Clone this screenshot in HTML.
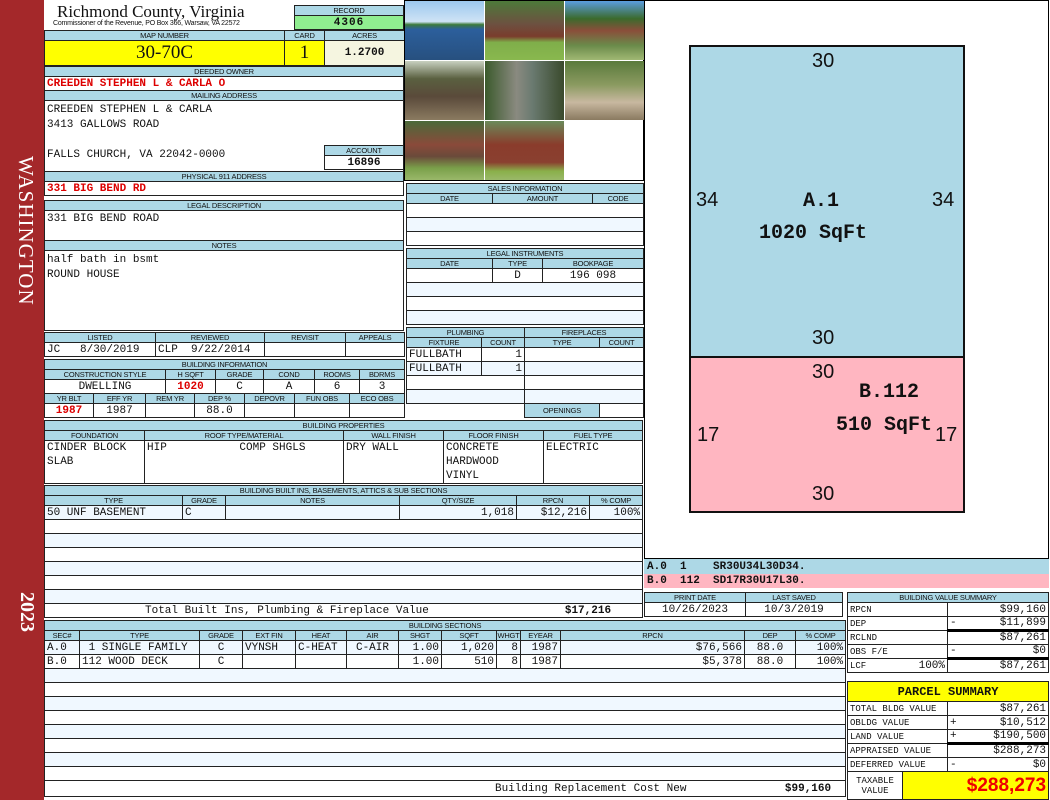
<!DOCTYPE html>
<html><head><meta charset="utf-8"><style>
*{margin:0;padding:0;box-sizing:border-box}
body{width:1050px;height:800px;position:relative;background:#fff;overflow:hidden;font-family:"Liberation Mono",monospace;color:#111}
.a{position:absolute}
table{position:absolute;border-collapse:collapse;table-layout:fixed}
td{border:1px solid #222;padding:0 2px;white-space:nowrap;overflow:hidden;font:11px/12px "Liberation Mono",monospace;height:14px}
td.h,.hd{background:#add8e6;font:7.5px/9px "Liberation Sans",sans-serif;text-align:center;height:10px;letter-spacing:-.2px;padding:0}
td.c{text-align:center}td.r{text-align:right}
tr.z td{background:#f0f8ff}
.red{color:#d00;font-weight:bold}
.ph{position:absolute;width:79px;height:59px}
</style></head><body>
<!-- sidebar -->
<div class="a" style="left:0;top:0;width:44px;height:800px;background:#a4282a"></div>
<div class="a" style="left:8px;top:156px;width:30px;height:170px;writing-mode:vertical-rl;color:#fff;font:21px 'Liberation Serif',serif;letter-spacing:1px">WASHINGTON</div>
<div class="a" style="left:8px;top:592px;width:30px;writing-mode:vertical-rl;color:#fff;font:bold 20px 'Liberation Serif',serif">2023</div>

<!-- title -->
<div class="a" style="left:57px;top:2px;font:17px/19px 'Liberation Serif',serif">Richmond County, Virginia</div>
<div class="a" style="left:53px;top:20px;font:7px/8px 'Liberation Sans',sans-serif;letter-spacing:-.2px">Commissioner of the Revenue, PO Box 366, Warsaw, VA 22572</div>
<table style="left:294px;top:5px;width:110px"><tr><td class="h">RECORD</td></tr><tr><td class="c" style="background:#90ee90;font-weight:bold;letter-spacing:1px">4306</td></tr></table>
<table style="left:44px;top:30px;width:360px"><col style="width:240px"><col style="width:40px"><col style="width:80px">
<tr><td class="h">MAP NUMBER</td><td class="h">CARD</td><td class="h">ACRES</td></tr>
<tr><td class="c" style="background:#ffff00;font:19px/24px 'Liberation Serif',serif;height:25px">30-70C</td><td class="c" style="background:#ffff00;font:19px/24px 'Liberation Serif',serif">1</td><td class="c" style="background:#f5f5e0;font-weight:bold">1.2700</td></tr></table>
<table style="left:44px;top:66px;width:360px"><tr><td class="h">DEEDED OWNER</td></tr><tr><td class="red">CREEDEN STEPHEN L &amp; CARLA O</td></tr><tr><td class="h">MAILING ADDRESS</td></tr>
<tr><td style="height:71px;vertical-align:top;line-height:15px;padding-top:2px">CREEDEN STEPHEN L &amp; CARLA<br>3413 GALLOWS ROAD<br><br>FALLS CHURCH, VA 22042-0000</td></tr>
<tr><td class="h">PHYSICAL 911 ADDRESS</td></tr><tr><td class="red">331 BIG BEND RD</td></tr></table>
<table style="left:324px;top:145px;width:80px"><tr><td class="h">ACCOUNT</td></tr><tr><td class="c" style="font-weight:bold;background:#fff">16896</td></tr></table>
<table style="left:44px;top:200px;width:360px"><tr><td class="h">LEGAL DESCRIPTION</td></tr><tr><td style="height:30px;vertical-align:top;padding-top:2px">331 BIG BEND ROAD</td></tr>
<tr><td class="h">NOTES</td></tr><tr><td style="height:80px;vertical-align:top;line-height:15px;padding-top:2px">half bath in bsmt<br>ROUND HOUSE</td></tr></table>
<table style="left:44px;top:332px;width:360px"><col style="width:111px"><col style="width:109px"><col style="width:81px"><col style="width:59px">
<tr><td class="h">LISTED</td><td class="h">REVIEWED</td><td class="h">REVISIT</td><td class="h">APPEALS</td></tr>
<tr><td>JC&nbsp;&nbsp;&nbsp;8/30/2019</td><td>CLP&nbsp;&nbsp;9/22/2014</td><td></td><td></td></tr></table>
<table style="left:44px;top:359px;width:360px"><col style="width:121px"><col style="width:50px"><col style="width:48px"><col style="width:51px"><col style="width:45px"><col style="width:45px">
<tr><td class="h" colspan="6">BUILDING INFORMATION</td></tr>
<tr><td class="h">CONSTRUCTION STYLE</td><td class="h">H SQFT</td><td class="h">GRADE</td><td class="h">COND</td><td class="h">ROOMS</td><td class="h">BDRMS</td></tr>
<tr><td class="c">DWELLING</td><td class="c red">1020</td><td class="c">C</td><td class="c">A</td><td class="c">6</td><td class="c">3</td></tr></table>
<table style="left:44px;top:393px;width:360px"><col style="width:49px"><col style="width:52px"><col style="width:49px"><col style="width:50px"><col style="width:50px"><col style="width:55px"><col style="width:55px">
<tr><td class="h">YR BLT</td><td class="h">EFF YR</td><td class="h">REM YR</td><td class="h">DEP %</td><td class="h">DEPOVR</td><td class="h">FUN OBS</td><td class="h">ECO OBS</td></tr>
<tr><td class="c red">1987</td><td class="c">1987</td><td></td><td class="c">88.0</td><td></td><td></td><td></td></tr></table>

<!-- photos -->
<div class="a" style="left:404px;top:0;width:240px;height:181px;background:#fff;border:1px solid #000"></div>
<div class="ph" style="left:405px;top:1px;background:linear-gradient(#9cc8ee 0,#cfe3f5 35%,#3c7a3a 40%,#2c5f9c 48%,#27507f 100%)"></div>
<div class="ph" style="left:485px;top:1px;background:linear-gradient(#4d7a3a 0,#6d5040 40%,#7a3c2c 60%,#7fae4a 70%,#89b84e 100%)"></div>
<div class="ph" style="left:565px;top:1px;background:linear-gradient(#5b9de0 0,#3b6a2c 30%,#8a4e3a 50%,#6a8a4a 75%,#a0b873 100%)"></div>
<div class="ph" style="left:405px;top:61px;background:linear-gradient(#c8d0c0 0,#5a6040 30%,#5a4a3a 60%,#8a7a60 100%)"></div>
<div class="ph" style="left:485px;top:61px;background:linear-gradient(90deg,#3b5a2c 0,#8a8a80 40%,#6a7a70 60%,#3a4a2c 100%)"></div>
<div class="ph" style="left:565px;top:61px;background:linear-gradient(#5a7a3c 0,#8a9a60 40%,#c8b8a0 70%,#8a7a60 100%)"></div>
<div class="ph" style="left:405px;top:121px;background:linear-gradient(#4a6a3a 0,#8a4a3a 40%,#6a4a3a 60%,#7aa04a 80%,#9ab86a 100%)"></div>
<div class="ph" style="left:485px;top:121px;background:linear-gradient(#6a8a5a 0,#8a3c2c 40%,#8a4030 70%,#8ab04a 85%,#9ab86a 100%)"></div>

<!-- sales -->
<table style="left:406px;top:183px;width:237px"><col style="width:86px"><col style="width:100px"><col style="width:51px">
<tr><td class="h" colspan="3">SALES INFORMATION</td></tr>
<tr><td class="h">DATE</td><td class="h">AMOUNT</td><td class="h">CODE</td></tr>
<tr><td colspan="3"></td></tr><tr class="z"><td colspan="3"></td></tr><tr><td colspan="3"></td></tr></table>
<table style="left:406px;top:248px;width:237px"><col style="width:86px"><col style="width:50px"><col style="width:101px">
<tr><td class="h" colspan="3">LEGAL INSTRUMENTS</td></tr>
<tr><td class="h">DATE</td><td class="h">TYPE</td><td class="h">BOOKPAGE</td></tr>
<tr><td></td><td class="c">D</td><td class="c">196 098</td></tr>
<tr class="z"><td colspan="3"></td></tr><tr><td colspan="3"></td></tr><tr class="z"><td colspan="3"></td></tr></table>
<table style="left:406px;top:327px;width:237px"><col style="width:75px"><col style="width:43px"><col style="width:75px"><col style="width:44px">
<tr><td class="h" colspan="2">PLUMBING</td><td class="h" colspan="2">FIREPLACES</td></tr>
<tr><td class="h">FIXTURE</td><td class="h">COUNT</td><td class="h">TYPE</td><td class="h">COUNT</td></tr>
<tr><td>FULLBATH</td><td class="r">1</td><td colspan="2"></td></tr>
<tr class="z"><td>FULLBATH</td><td class="r">1</td><td colspan="2"></td></tr>
<tr><td colspan="2"></td><td colspan="2"></td></tr>
<tr class="z"><td colspan="2"></td><td colspan="2"></td></tr>
<tr><td colspan="2" style="border:none;background:#fff"></td><td class="h" style="height:12px">OPENINGS</td><td></td></tr></table>

<!-- building properties -->
<table style="left:44px;top:420px;width:598px"><col style="width:100px"><col style="width:199px"><col style="width:100px"><col style="width:100px"><col style="width:99px">
<tr><td class="h" colspan="5">BUILDING PROPERTIES</td></tr>
<tr><td class="h">FOUNDATION</td><td class="h">ROOF TYPE/MATERIAL</td><td class="h">WALL FINISH</td><td class="h">FLOOR FINISH</td><td class="h">FUEL TYPE</td></tr>
<tr><td style="height:42px;vertical-align:top;line-height:14px">CINDER BLOCK<br>SLAB</td><td style="vertical-align:top;line-height:14px">HIP&nbsp;&nbsp;&nbsp;&nbsp;&nbsp;&nbsp;&nbsp;&nbsp;&nbsp;&nbsp;&nbsp;COMP SHGLS</td><td style="vertical-align:top;line-height:14px">DRY WALL</td><td style="vertical-align:top;line-height:14px">CONCRETE<br>HARDWOOD<br>VINYL</td><td style="vertical-align:top;line-height:14px">ELECTRIC</td></tr></table>
<table style="left:44px;top:485px;width:598px"><col style="width:138px"><col style="width:43px"><col style="width:174px"><col style="width:117px"><col style="width:73px"><col style="width:53px">
<tr><td class="h" colspan="6">BUILDING BUILT INS, BASEMENTS, ATTICS &amp; SUB SECTIONS</td></tr>
<tr><td class="h">TYPE</td><td class="h">GRADE</td><td class="h">NOTES</td><td class="h">QTY/SIZE</td><td class="h">RPCN</td><td class="h">% COMP</td></tr>
<tr class="z"><td>50 UNF BASEMENT</td><td>C</td><td></td><td class="r">1,018</td><td class="r">$12,216</td><td class="r">100%</td></tr>
<tr><td colspan="6"></td></tr><tr class="z"><td colspan="6"></td></tr><tr><td colspan="6"></td></tr><tr class="z"><td colspan="6"></td></tr><tr><td colspan="6"></td></tr><tr class="z"><td colspan="6"></td></tr>
<tr><td colspan="6" style="padding-left:100px">Total Built Ins, Plumbing &amp; Fireplace Value<b style="float:right;margin-right:29px">$17,216</b></td></tr></table>

<!-- building sections -->
<table style="left:44px;top:620px;width:801px"><col style="width:35px"><col style="width:120px"><col style="width:43px"><col style="width:53px"><col style="width:51px"><col style="width:52px"><col style="width:43px"><col style="width:55px"><col style="width:24px"><col style="width:40px"><col style="width:184px"><col style="width:51px"><col style="width:50px">
<tr><td class="h" colspan="13">BUILDING SECTIONS</td></tr>
<tr><td class="h">SEC#</td><td class="h">TYPE</td><td class="h">GRADE</td><td class="h">EXT FIN</td><td class="h">HEAT</td><td class="h">AIR</td><td class="h">SHGT</td><td class="h">SQFT</td><td class="h">WHGT</td><td class="h">EYEAR</td><td class="h">RPCN</td><td class="h">DEP</td><td class="h">% COMP</td></tr>
<tr class="z"><td>A.0</td><td>&nbsp;1 SINGLE FAMILY</td><td class="c">C</td><td>VYNSH</td><td>C-HEAT</td><td class="c">C-AIR</td><td class="r">1.00</td><td class="r">1,020</td><td class="r">8</td><td class="r">1987</td><td class="r">$76,566</td><td class="c">88.0</td><td class="r">100%</td></tr>
<tr><td>B.0</td><td>112 WOOD DECK</td><td class="c">C</td><td></td><td></td><td></td><td class="r">1.00</td><td class="r">510</td><td class="r">8</td><td class="r">1987</td><td class="r">$5,378</td><td class="c">88.0</td><td class="r">100%</td></tr>
<tr class="z"><td colspan="13"></td></tr><tr><td colspan="13"></td></tr><tr class="z"><td colspan="13"></td></tr><tr><td colspan="13"></td></tr><tr class="z"><td colspan="13"></td></tr><tr><td colspan="13"></td></tr><tr class="z"><td colspan="13"></td></tr><tr><td colspan="13"></td></tr>
<tr><td colspan="13" style="padding-left:450px;height:16px">Building Replacement Cost New<b style="float:right;margin-right:12px">$99,160</b></td></tr></table>

<!-- sketch -->
<div class="a" style="left:644px;top:0;width:405px;height:559px;border:1px solid #000"></div>
<div class="a" style="left:689px;top:45px;width:276px;height:313px;background:#add8e6;border:2px solid #111"></div>
<div class="a" style="left:689px;top:356px;width:276px;height:157px;background:#ffb6c1;border:2px solid #111"></div>
<div class="a" style="font:20px 'Liberation Sans',sans-serif;left:812px;top:50px">30</div>
<div class="a" style="font:20px 'Liberation Sans',sans-serif;left:696px;top:189px">34</div>
<div class="a" style="font:20px 'Liberation Sans',sans-serif;left:932px;top:189px">34</div>
<div class="a" style="font:bold 20px 'Liberation Mono',monospace;left:803px;top:190px">A.1</div>
<div class="a" style="font:bold 20px 'Liberation Mono',monospace;left:759px;top:222px">1020 SqFt</div>
<div class="a" style="font:20px 'Liberation Sans',sans-serif;left:812px;top:327px">30</div>
<div class="a" style="font:20px 'Liberation Sans',sans-serif;left:812px;top:361px">30</div>
<div class="a" style="font:bold 20px 'Liberation Mono',monospace;left:859px;top:381px">B.112</div>
<div class="a" style="font:bold 20px 'Liberation Mono',monospace;left:836px;top:414px">510 SqFt</div>
<div class="a" style="font:20px 'Liberation Sans',sans-serif;left:697px;top:424px">17</div>
<div class="a" style="font:20px 'Liberation Sans',sans-serif;left:935px;top:424px">17</div>
<div class="a" style="font:20px 'Liberation Sans',sans-serif;left:812px;top:483px">30</div>
<table style="left:644px;top:559px;width:405px"><tr><td style="background:#add8e6;font-weight:bold;border-color:#add8e6">A.0&nbsp;&nbsp;1&nbsp;&nbsp;&nbsp;&nbsp;SR30U34L30D34.</td></tr><tr><td style="background:#ffb6c1;font-weight:bold;border-color:#ffb6c1">B.0&nbsp;&nbsp;112&nbsp;&nbsp;SD17R30U17L30.</td></tr></table>

<table style="left:644px;top:592px;width:198px"><col style="width:101px"><col style="width:97px">
<tr><td class="h">PRINT DATE</td><td class="h">LAST SAVED</td></tr><tr><td class="c">10/26/2023</td><td class="c">10/3/2019</td></tr></table>

<table style="left:847px;top:592px;width:201px"><col style="width:100px"><col style="width:101px">
<tr><td class="h" colspan="2">BUILDING VALUE SUMMARY</td></tr>
<tr><td style="font-size:9px">RPCN</td><td class="r">$99,160</td></tr>
<tr><td style="font-size:9px">DEP</td><td class="r" style="border-bottom:3px solid #000"><span style="float:left">-</span>$11,899</td></tr>
<tr><td style="font-size:9px">RCLND</td><td class="r">$87,261</td></tr>
<tr><td style="font-size:9px">OBS F/E</td><td class="r" style="border-bottom:3px solid #000"><span style="float:left">-</span>$0</td></tr>
<tr><td style="font-size:9px">LCF<span style="float:right;font-size:11px">100%</span></td><td class="r">$87,261</td></tr></table>

<table style="left:847px;top:681px;width:201px"><col style="width:55px"><col style="width:45px"><col style="width:101px">
<tr><td colspan="3" class="c" style="background:#ffff00;font:bold 12px/18px 'Liberation Mono',monospace;height:20px">PARCEL SUMMARY</td></tr>
<tr><td colspan="2" style="font-size:9px">TOTAL BLDG VALUE</td><td class="r">$87,261</td></tr>
<tr><td colspan="2" style="font-size:9px">OBLDG VALUE</td><td class="r"><span style="float:left">+</span>$10,512</td></tr>
<tr><td colspan="2" style="font-size:9px">LAND VALUE</td><td class="r" style="border-bottom:3px solid #000"><span style="float:left">+</span>$190,500</td></tr>
<tr><td colspan="2" style="font-size:9px">APPRAISED VALUE</td><td class="r">$288,273</td></tr>
<tr><td colspan="2" style="font-size:9px">DEFERRED VALUE</td><td class="r"><span style="float:left">-</span>$0</td></tr>
<tr><td class="c" style="font-size:9px;line-height:10px;height:28px">TAXABLE<br>VALUE</td><td colspan="2" class="r" style="background:#ffff00;color:#e00;font:bold 19px 'Liberation Sans',sans-serif">$288,273</td></tr></table>
</body></html>
